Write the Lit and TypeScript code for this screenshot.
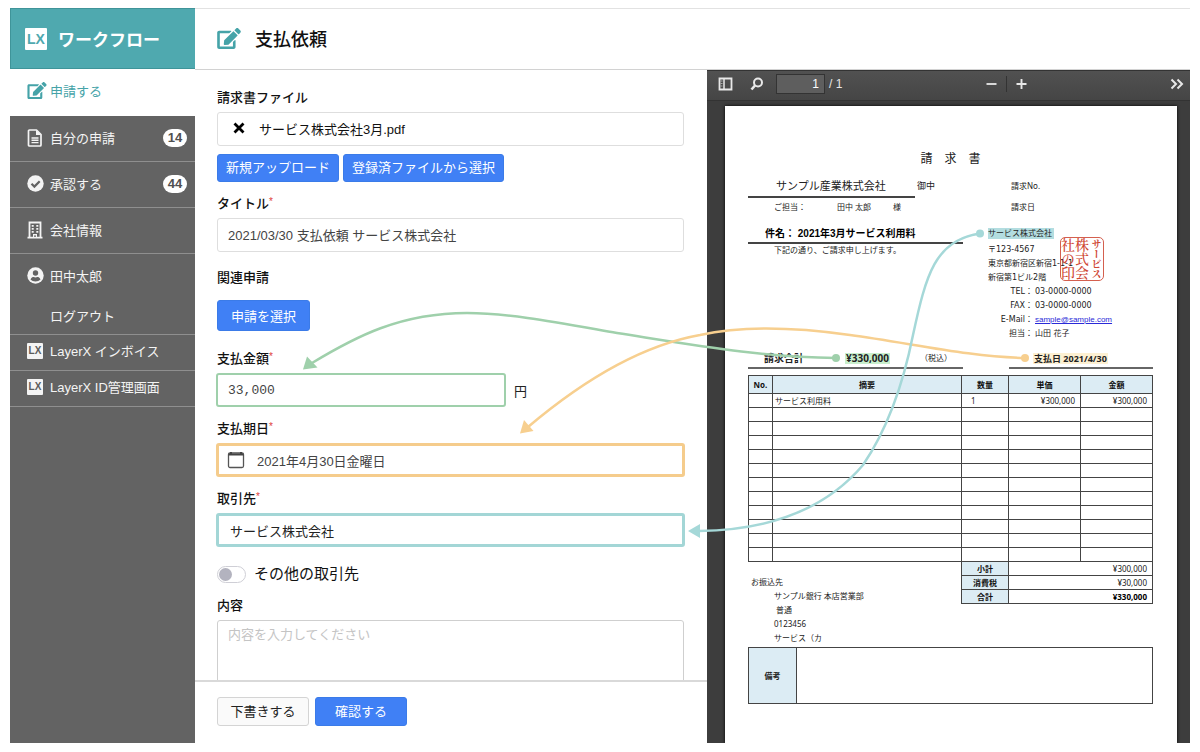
import { LitElement, html, css, svg, nothing } from "lit";
import { customElement, property, state } from "lit/decorators.js";
import { classMap } from "lit/directives/class-map.js";

const editIcon = svg`<path fill="currentColor" d="M402.6 83.2l90.2 90.2c3.8 3.8 3.8 10 0 13.8L274.4 405.6l-92.8 10.3c-12.4 1.4-22.9-9.1-21.5-21.5l10.3-92.8L388.8 83.2c3.8-3.8 10-3.8 13.8 0zm162-22.9l-48.8-48.8c-15.2-15.2-39.9-15.2-55.2 0l-35.4 35.4c-3.8 3.8-3.8 10 0 13.8l90.2 90.2c3.8 3.8 10 3.8 13.8 0l35.4-35.4c15.2-15.3 15.2-40 0-55.2zM384 346.2V448H64V128h229.8c3.2 0 6.2-1.3 8.5-3.5l40-40c7.6-7.6 2.2-20.5-8.5-20.5H48C21.5 64 0 85.5 0 112v352c0 26.5 21.5 48 48 48h352c26.5 0 48-21.5 48-48V306.2c0-10.7-12.9-16-20.5-8.5l-40 40c-2.2 2.3-3.5 5.3-3.5 8.5z"/>`;

const icons: Record<string, unknown> = {
  edit: html`<svg viewBox="0 0 576 512" width="20" height="17" aria-hidden="true">${editIcon}</svg>`,
  file: html`<svg viewBox="0 0 16 18" width="16" height="18" aria-hidden="true">
    <path d="M2.5 1h7L14 5.500V16a1 1 0 0 1-1 1H2.500a1 1 0 0 1-1-1V2a1 1 0 0 1 1-1z" fill="none" stroke="currentColor" stroke-width="1.700" stroke-linejoin="round"/>
    <path d="M9 1v5h5z" fill="currentColor"/><path d="M4.500 9h7M4.500 11.300h7M4.500 13.600h7" stroke="currentColor" stroke-width="1.400"/></svg>`,
  check: html`<svg viewBox="0 0 17 17" width="17" height="17" aria-hidden="true">
    <circle cx="8.5" cy="8.5" r="8.2" fill="currentColor"/><path d="M4.500 8.800l2.900 2.800 5.300-5.400" fill="none" stroke="#636363" stroke-width="2.200"/></svg>`,
  building: html`<svg viewBox="0 0 16 18" width="16" height="18" aria-hidden="true">
    <path d="M2.500 16.500V1.500h11v15M.5 16.700h15" fill="none" stroke="currentColor" stroke-width="1.800"/>
    <path d="M4.700 4h2v1.700h-2zM9.300 4h2v1.700h-2zM4.700 7h2v1.700h-2zM9.300 7h2v1.700h-2zM4.700 10h2v1.700h-2zM9.300 10h2v1.700h-2zM6 13h4v3.500H9v-2H7v2H6z" fill="currentColor"/></svg>`,
  user: html`<svg viewBox="0 0 17 17" width="17" height="17" aria-hidden="true">
    <circle cx="8.5" cy="8.5" r="8.2" fill="currentColor"/><circle cx="8.5" cy="6" r="2.700" fill="#636363"/>
    <path d="M3.500 12.500c.8-1.900 2-2.400 3.200-2.400 1.200.5 2.400.5 3.600 0 1.200 0 2.400.5 3.200 2.400-2.400 2.600-7.600 2.600-10 0z" fill="#636363"/></svg>`,
  lx: html`<span class="mark" aria-hidden="true">LX</span>`,
};

interface NavEntry { icon: string; label: string; count?: number; active?: boolean; slim?: boolean; sub?: string }

const NAV: NavEntry[] = [
  { icon: "edit", label: "申請する", active: true },
  { icon: "file", label: "自分の申請", count: 14 },
  { icon: "check", label: "承認する", count: 44 },
  { icon: "building", label: "会社情報" },
  { icon: "user", label: "田中太郎", sub: "ログアウト" },
  { icon: "lx", label: "LayerX インボイス", slim: true },
  { icon: "lx", label: "LayerX ID管理画面", slim: true },
];

@customElement("side-nav")
export class SideNav extends LitElement {
  @property({ attribute: false }) entries: NavEntry[] = [];

  static styles = css`
    :host { display: block; background: #636363; color: #f4f4f4; font-size: 13px; }
    .brand { display: flex; align-items: center; gap: 11px; height: 61px; padding: 0 13px; background: #4fa9af; color: #fff; box-sizing: border-box; border: 1px solid #3f9499; border-right: 0; }
    .brand strong { font-size: 17px; font-weight: 700; }
    ul { list-style: none; margin: 0; padding: 0; }
    li { border-bottom: 1px solid #8f8f8f; }
    li.active { background: #fff; color: #45a3a8; border-bottom: 0; }
    a { display: flex; align-items: center; box-sizing: border-box; height: 45px; padding: 0 8px 2px 17px; color: inherit; text-decoration: none; }
    li.active a { height: 47px; padding-bottom: 4px; }
    li.slim a { height: 35px; padding-bottom: 4px; }
    a.sub { height: 35px; padding: 0 8px 2px 40px; }
    .icon { display: flex; width: 23px; flex: none; }
    .label { flex: 1; }
    .badge { min-width: 24px; height: 18px; line-height: 18px; border-radius: 9px; background: #fff; color: #505050; text-align: center; font-size: 13px; font-weight: 700; }
    .mark { width: 16px; height: 16px; line-height: 16px; background: #f4f4f4; color: #5c5c5c; font-size: 10px; text-align: center; font-weight: 700; border-radius: 1px; }
    .brand .mark { width: 22px; height: 22px; line-height: 22px; background: #fff; color: #4fa9af; font-size: 14px; margin-left: 1px; }
  `;

  render() {
    return html`
      <div class="brand"><span class="mark">LX</span><strong>ワークフロー</strong></div>
      <nav><ul>${this.entries.map((e) => html`
        <li class=${classMap({ active: !!e.active, slim: !!e.slim })}>
          <a href="#"><span class="icon">${icons[e.icon]}</span><span class="label">${e.label}</span>
            ${e.count ? html`<span class="badge">${e.count}</span>` : nothing}</a>
          ${e.sub ? html`<a class="sub" href="#">${e.sub}</a>` : nothing}
        </li>`)}</ul></nav>`;
  }
}

@customElement("request-form")
export class RequestForm extends LitElement {
  @state() private other = false;

  static styles = css`
    :host { display: flex; flex-direction: column; min-height: 0; font-size: 13px; color: #222; }
    form { display: contents; }
    .body { flex: 1; min-height: 0; overflow: hidden; padding: 18px 23px 0 22px; }
    .group { display: flex; flex-direction: column; gap: 4px; margin-bottom: 12px; }
    .group.wide { margin-bottom: 16px; }
    .group.related { gap: 12px; margin-bottom: 18px; align-items: flex-start; }
    label, .caption { line-height: 20px; font-weight: 500; color: #111; }
    sup { color: #e0403a; font-size: 10px; line-height: 0; vertical-align: 3px; }
    input, textarea, button { font-family: inherit; font-size: 13px; box-sizing: border-box; margin: 0; }
    .box { display: flex; align-items: center; height: 34px; box-sizing: border-box; border: 1px solid #dedede; border-radius: 3px; background: #fff; padding: 0 10px 2px; color: #444; width: 100%; outline: none; }
    .file { gap: 13px; padding-left: 14px; color: #111; }
    .file button { display: flex; border: 0; padding: 0; background: none; color: #000; }
    .hi { width: auto; margin: 0 -1px; border-width: 2px; padding-bottom: 0; }
    .green { border-color: #9fd0ab; }
    .orange { border-color: #f5cc8c; border-width: 3px; padding-left: 8px; }
    .teal { border-color: #a3d6d6; border-width: 3px; padding-left: 11px; color: #222; }
    .date { gap: 12px; }
    .date input { border: 0; padding: 0; background: none; color: #444; outline: none; flex: 1; min-width: 0; }
    .amount { display: flex; align-items: center; gap: 9px; }
    .amount input { flex: 0 1 290px; font-family: "Liberation Mono", monospace; }
    .row { display: flex; gap: 4px; margin-top: 4px; }
    button.btn { height: 28px; border: 1px solid #3b7be8; border-radius: 3px; background: #4080f5; color: #fff; padding: 0 8px 3px; }
    button.mid { height: 31px; padding: 0 13px 1px; }
    button.foot { height: 29px; width: 92px; padding: 0 0 2px; }
    button.plain { background: #fafafa; border-color: #d4d4d4; color: #222; }
    .switch { display: flex; align-items: center; gap: 8px; height: 20px; margin: 17px 0 12px; font-size: 15px; }
    .switch input { appearance: none; width: 29px; height: 17px; border: 1px solid #cfcfd6; border-radius: 9px; background: #fff; display: flex; align-items: center; padding: 1px; }
    .switch input::before { content: ""; width: 13px; height: 13px; border-radius: 50%; background: #b3b3bf; }
    .switch input:checked { justify-content: flex-end; background: #4080f5; }
    .switch label { font-weight: 400; }
    textarea.box { height: 90px; padding: 5px 10px; line-height: 18px; resize: none; border-color: #cfcfcf; }
    textarea::placeholder { color: #c4c4c4; }
    footer { display: flex; gap: 6px; align-items: flex-start; padding: 15px 22px 17px; border-top: 2px solid #d9d9d9; }
  `;

  render() {
    return html`<form @submit=${(e: Event) => e.preventDefault()}>
      <div class="body">
        <div class="group">
          <span class="caption">請求書ファイル</span>
          <div class="box file">
            <button type="button" aria-label="削除"><svg width="14" height="14" viewBox="0 0 14 14"><path d="M2.500 2.500l9 9M11.500 2.500l-9 9" stroke="currentColor" stroke-width="2.800"/></svg></button>
            <span>サービス株式会社3月.pdf</span>
          </div>
          <div class="row">
            <button type="button" class="btn">新規アップロード</button>
            <button type="button" class="btn">登録済ファイルから選択</button>
          </div>
        </div>
        <div class="group wide">
          <label for="title">タイトル<sup>*</sup></label>
          <input id="title" class="box" type="text" .value=${"2021/03/30 支払依頼 サービス株式会社"} />
        </div>
        <div class="group related">
          <span class="caption">関連申請</span>
          <button type="button" class="btn mid">申請を選択</button>
        </div>
        <div class="group">
          <label for="amount">支払金額<sup>*</sup></label>
          <div class="amount"><input id="amount" class="box hi green" type="text" inputmode="numeric" .value=${"33,000"} /><span>円</span></div>
        </div>
        <div class="group">
          <label for="due">支払期日<sup>*</sup></label>
          <div class="box hi orange date">
            <svg width="18" height="18" viewBox="0 0 18 18" aria-hidden="true"><rect x="1.500" y="2" width="15" height="14.500" rx="1.500" fill="none" stroke="#555" stroke-width="1.300"/><path d="M1.500 3.500h15M4 1v1.500M14 1v1.500" stroke="#444" stroke-width="2"/></svg>
            <input id="due" type="text" .value=${"2021年4月30日金曜日"} />
          </div>
        </div>
        <div class="group">
          <label for="vendor">取引先<sup>*</sup></label>
          <input id="vendor" class="box hi teal" type="text" .value=${"サービス株式会社"} />
        </div>
        <div class="switch">
          <input id="other" type="checkbox" role="switch" .checked=${this.other} @change=${() => (this.other = !this.other)} />
          <label for="other">その他の取引先</label>
        </div>
        <div class="group">
          <label for="memo">内容</label>
          <textarea id="memo" class="box" placeholder="内容を入力してください"></textarea>
        </div>
      </div>
      <footer>
        <button type="button" class="btn foot plain">下書きする</button>
        <button type="submit" class="btn foot">確認する</button>
      </footer>
    </form>`;
  }
}

@customElement("invoice-sheet")
export class InvoiceSheet extends LitElement {
  static styles = css`
    :host { display: block; box-sizing: border-box; background: #fff; color: #222; padding: 45px 24px 0 23px; font-size: 8px; line-height: 14px; font-family: "Noto Sans", "Noto Sans CJK JP", sans-serif; box-shadow: 0 0 3px #000; }
    h2 { margin: 0 0 11px; font-size: 12px; line-height: 16px; font-weight: 400; text-align: center; }
    .head { display: grid; grid-template-columns: minmax(0, 215fr) minmax(0, 165fr); column-gap: 25px; }
    .to { display: flex; gap: 2px; font-size: 9px; line-height: 16px; white-space: nowrap; }
    .to b { flex: 0 1 167px; box-sizing: border-box; padding: 0 0 2px 28px; font-size: 11px; font-weight: 400; border-bottom: 2px solid #444; }
    .person { display: flex; padding: 2px 0 12px 26px; white-space: nowrap; }
    .person span:nth-child(1) { width: 63px; }
    .person span:nth-child(2) { width: 56px; }
    .subject { font-size: 10px; line-height: 16px; font-weight: 700; padding-left: 17px; border-bottom: 2px solid #444; white-space: nowrap; color: #000; font-family: "Liberation Sans", "Noto Sans CJK JP", sans-serif; }
    .note { padding-left: 26px; line-height: 12px; white-space: nowrap; }
    .issuer { position: relative; font-family: "DejaVu Sans", "Noto Sans CJK JP", sans-serif; white-space: nowrap; padding-top: 1px; }
    .meta { padding-left: 23px; display: grid; gap: 7px; margin-bottom: 13px; font-family: "Noto Sans", "Noto Sans CJK JP", sans-serif; }
    mark { color: inherit; padding: 0 1px; line-height: 11px; }
    mark.teal { background: #b3dde0; display: inline-block; padding: 0 2px 0 0; }
    mark.green { background: #c9efcd; }
    mark.orange { background: #fdf0d2; }
    address { font-style: normal; margin-top: 2px; }
    dl { display: grid; grid-template-columns: 45px auto; column-gap: 2px; grid-auto-rows: 14px; margin: 0; }
    dt { text-align: right; }
    dd { margin: 0; }
    dd a { color: #2a2ad8; font-family: "Liberation Sans", sans-serif; }
    .seal { position: absolute; left: 72px; top: 59px; width: 44px; height: 44px; box-sizing: border-box; border: 1px solid #d4604f; border-radius: 5px; color: #cf4632; display: flex; flex-direction: row-reverse; justify-content: center; font: 500 14px/14px "Noto Serif CJK JP", "Noto Sans CJK JP", sans-serif; }
    .seal span { writing-mode: vertical-rl; display: flex; align-items: center; justify-content: center; }
    .seal .narrow { font-size: 10px; line-height: 14px; font-weight: 700; }
    .sum { display: grid; grid-template-columns: minmax(0, 215fr) minmax(0, 144fr); column-gap: 46px; margin-top: 8px; line-height: 18px; white-space: nowrap; }
    .sum > div { border-bottom: 2px solid #666; display: flex; align-items: center; }
    .total { padding-left: 16px; font-size: 10px; }
    .total span:nth-child(1) { font-weight: 700; width: 81px; }
    .total mark { font-weight: 700; }
    .total small { font-size: 8px; margin-left: 30px; }
    .due { padding-left: 24px; font-size: 9px; font-weight: 700; }
    table { border-collapse: collapse; table-layout: fixed; width: 100%; margin-top: 6px; line-height: 12px; }
    tr { height: 14px; }
    thead tr { height: 18px; }
    th, td { border: 1px solid #444; padding: 0 5px; text-align: right; font-weight: 400; }
    th { background: #dcecf4; font-weight: 700; text-align: center; padding: 0; color: #111; }
    td:nth-child(2) { text-align: left; padding-left: 2px; }
    td:nth-child(3) { text-align: left; padding-left: 9px; }
    .no { width: 24px; } .qty { width: 47px; } .money { width: 72px; }
    .bottom { display: flex; align-items: flex-start; justify-content: space-between; }
    .bank { padding: 13px 0 0 3px; white-space: nowrap; margin: 0; }
    .bank p { margin: 0 0 0 23px; }
    .totals { width: 192px; margin: -1px 0 0; }
    .totals td:nth-child(2) { text-align: right; padding-right: 5px; }
    .strong td { font-weight: 700; color: #000; }
    .remarks { display: flex; height: 57px; box-sizing: border-box; border: 1px solid #444; margin-top: 2px; }
    .remarks b { width: 47px; border-right: 1px solid #444; background: #dcecf4; display: grid; place-items: center; }
  `;

  render() {
    const blanks = Array.from({ length: 11 });
    return html`
      <h2>請　求　書</h2>
      <div class="head">
        <div>
          <div class="to"><b>サンプル産業株式会社</b><span>御中</span></div>
          <div class="person"><span>ご担当：</span><span>田中 太郎</span><span>様</span></div>
          <div class="subject">件名： 2021年3月サービス利用料</div>
          <div class="note">下記の通り、ご請求申し上げます。</div>
        </div>
        <div class="issuer">
          <div class="meta"><span>請求No.</span><span>請求日</span></div>
          <mark class="teal">サービス株式会社</mark>
          <address>〒123-4567<br />東京都新宿区新宿1-1-1<br />新宿第1ビル2階</address>
          <dl>
            <dt>TEL：</dt><dd>03-0000-0000</dd>
            <dt>FAX：</dt><dd>03-0000-0000</dd>
            <dt>E-Mail：</dt><dd><a href="mailto:sample@sample.com">sample@sample.com</a></dd>
            <dt>担当：</dt><dd>山田 花子</dd>
          </dl>
          <div class="seal"><span class="narrow">サービス</span><span>株式会</span><span>社の印</span></div>
        </div>
      </div>
      <div class="sum">
        <div class="total"><span>請求合計</span><mark class="green">¥330,000</mark><small>（税込）</small></div>
        <div class="due"><mark class="orange">支払日 2021/4/30</mark></div>
      </div>
      <table>
        <colgroup><col class="no" /><col /><col class="qty" /><col class="money" /><col class="money" /></colgroup>
        <thead><tr><th>No.</th><th>摘要</th><th>数量</th><th>単価</th><th>金額</th></tr></thead>
        <tbody>
          <tr><td></td><td>サービス利用料</td><td>1</td><td>¥300,000</td><td>¥300,000</td></tr>
          ${blanks.map(() => html`<tr><td></td><td></td><td></td><td></td><td></td></tr>`)}
        </tbody>
      </table>
      <div class="bottom">
        <div class="bank">お振込先<p>サンプル銀行 本店営業部</p><p>&nbsp;普通</p><p>0123456</p><p>サービス（カ</p></div>
        <table class="totals">
          <colgroup><col class="qty" /><col /></colgroup>
          <tbody>
            <tr><th>小計</th><td>¥300,000</td></tr>
            <tr><th>消費税</th><td>¥30,000</td></tr>
            <tr class="strong"><th>合計</th><td>¥330,000</td></tr>
          </tbody>
        </table>
      </div>
      <div class="remarks"><b>備考</b></div>`;
  }
}

@customElement("pdf-viewer")
export class PdfViewer extends LitElement {
  static styles = css`
    :host { display: flex; flex-direction: column; min-height: 0; overflow: hidden; background: #3d3d3d; color: #e8e8e8; font-size: 12px; }
    .bar { display: flex; align-items: center; justify-content: space-between; height: 31px; box-sizing: border-box; padding: 0 6px 3px 11px; background: linear-gradient(#515151, #454545); border-top: 1px solid #333; border-bottom: 1px solid #333; }
    .set { display: flex; align-items: center; }
    button { display: flex; border: 0; padding: 0; background: none; color: inherit; }
    .find { margin: 0 12px 0 17px; }
    input { width: 49px; height: 20px; box-sizing: border-box; margin: 0 4px 0 0; border: 1px solid #333; background: #5e5e5e; color: #fff; text-align: right; padding: 0 5px; font: 12px "Liberation Sans", sans-serif; }
    .split { width: 1px; height: 16px; background: #333; margin: 0 9px; }
    .page { flex: 1; min-height: 0; padding: 5px 13px 0 18px; display: flex; }
    invoice-sheet { flex: 1; min-width: 0; }
  `;

  render() {
    return html`
      <div class="bar">
        <div class="set">
          <button aria-label="サイドバー"><svg width="15" height="14" viewBox="0 0 15 14"><path d="M1.500 1.500h12v11h-12z" fill="none" stroke="currentColor" stroke-width="1.800"/><path d="M6 1.500v11" stroke="currentColor" stroke-width="1.500"/><path d="M2.500 4h2M2.500 6.500h2M2.500 9h2" stroke="#aaa"/></svg></button>
          <button class="find" aria-label="検索"><svg width="14" height="14" viewBox="0 0 14 14"><circle cx="8" cy="5.500" r="4" fill="none" stroke="currentColor" stroke-width="2"/><path d="M5 8.500L1.500 12.500" stroke="currentColor" stroke-width="2.600"/></svg></button>
          <input aria-label="ページ" type="text" .value=${"1"} /><span>/ 1</span>
        </div>
        <div class="set">
          <button aria-label="縮小"><svg width="11" height="12" viewBox="0 0 11 12"><path d="M.5 6h10" stroke="currentColor" stroke-width="1.800"/></svg></button>
          <span class="split"></span>
          <button aria-label="拡大"><svg width="11" height="12" viewBox="0 0 11 12"><path d="M.5 6h10M5.500 1v10" stroke="currentColor" stroke-width="1.900"/></svg></button>
        </div>
        <button aria-label="ツール"><svg width="14" height="12" viewBox="0 0 14 12"><path d="M1.500 1.500L6 6l-4.500 4.500M7.500 1.500L12 6l-4.500 4.500" fill="none" stroke="currentColor" stroke-width="2"/></svg></button>
      </div>
      <div class="page"><invoice-sheet></invoice-sheet></div>`;
  }
}

@customElement("app-root")
export class AppRoot extends LitElement {
  static styles = css`
    :host { display: block; position: relative; height: 100vh; box-sizing: border-box; padding: 8px 10px 9px; background: #fff; font-family: "Liberation Sans", "Noto Sans CJK JP", sans-serif; }
    .app { display: grid; grid-template-columns: 185px minmax(0, 1fr); height: 100%; }
    main { display: flex; flex-direction: column; min-height: 0; min-width: 0; }
    header { display: flex; align-items: center; gap: 14px; height: 62px; box-sizing: border-box; padding: 0 22px 2px; border-top: 1px solid #e2e2e2; border-bottom: 1px solid #d2d2d2; color: #45a3a8; }
    h1 { margin: 0; font-size: 18px; font-weight: 500; color: #111; }
    .work { flex: 1; min-height: 0; display: grid; grid-template: minmax(0, 1fr) / minmax(0, 512fr) minmax(0, 483fr); }
    .links { position: absolute; inset: 0; width: 100%; height: 100%; pointer-events: none; }
  `;

  render() {
    return html`
      <div class="app">
        <side-nav .entries=${NAV}></side-nav>
        <main>
          <header><svg viewBox="0 0 576 512" width="24" height="21" aria-hidden="true">${editIcon}</svg><h1>支払依頼</h1></header>
          <div class="work"><request-form></request-form><pdf-viewer></pdf-viewer></div>
        </main>
      </div>
      <svg class="links" viewBox="0 0 1200 752" preserveAspectRatio="none" fill="none" stroke-width="2.500" aria-hidden="true">
        <g stroke="#9fd0ab"><path d="M836 358C760 357 700 346 617 333C560 323 510 313 467 313C400 313 355 337 312 363"/><circle cx="836" cy="358" r="4" fill="#9fd0ab" stroke="none"/><path d="M303 369.500l4-13 10.500 11z" fill="#9fd0ab" stroke="none"/></g>
        <g stroke="#f7cf8f"><path d="M1025 358C970 357 910 343 850 335C800 328 745 325 700 335C638 346 580 383 528 427"/><circle cx="1025" cy="358" r="4" fill="#f7cf8f" stroke="none"/><path d="M520 433.500l4-13.500 9.500 11z" fill="#f7cf8f" stroke="none"/></g>
        <g stroke="#a5d8d8"><path d="M980 233.500C935 240 926 275 913 335C900 400 880 440 863 465C825 510 770 530 699 531"/><circle cx="980" cy="233.500" r="4" fill="#a5d8d8" stroke="none"/><path d="M688 531l12-7v14z" fill="#a5d8d8" stroke="none"/></g>
      </svg>`;
  }
}
